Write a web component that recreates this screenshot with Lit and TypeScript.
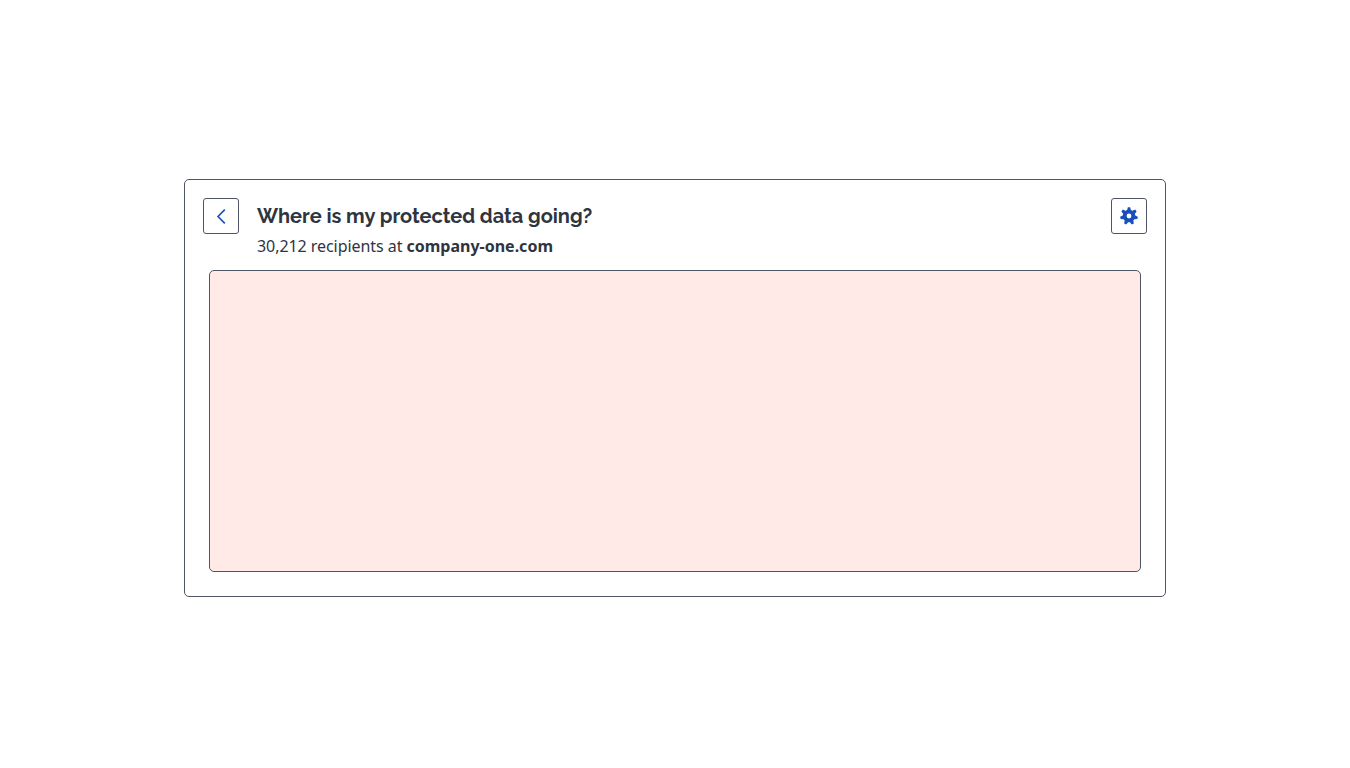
import { LitElement, html, css } from "lit";
import { customElement, property } from "lit/decorators.js";

// Builds a cog outline with evenly spaced teeth, the first one pointing up.
function cogPath(teeth: number, root: number, tip: number): string {
  const step = (Math.PI * 2) / teeth;
  const points: string[] = [];
  for (let i = 0; i < teeth; i++) {
    const a = i * step - Math.PI / 2;
    const corners: [number, number][] = [
      [root, -0.3],
      [tip, -0.13],
      [tip, 0.13],
      [root, 0.3],
    ];
    for (const [r, d] of corners) {
      points.push(`${(9 + r * Math.cos(a + d)).toFixed(2)} ${(9 + r * Math.sin(a + d)).toFixed(2)}`);
    }
  }
  return `M${points.join("L")}ZM9 6.6a2.4 2.4 0 1 0 0 4.8a2.4 2.4 0 1 0 0-4.8Z`;
}

const COG = cogPath(7, 6.3, 8.9);

@customElement("icon-button")
class IconButton extends LitElement {
  @property() icon = "back";
  @property() label = "";

  static styles = css`
    :host {
      display: block;
      flex: none;
    }
    .button {
      display: flex;
      align-items: center;
      justify-content: center;
      box-sizing: border-box;
      width: 36px;
      height: 36px;
      margin: 0;
      padding: 0;
      border: 1px solid #505565;
      border-radius: 3px;
      background: #fff;
      color: #1850bb;
    }
    .glyph {
      display: block;
      width: 18px;
      height: 18px;
    }
  `;

  render() {
    return html`<button class="button" aria-label=${this.label}>
      ${this.icon === "back"
        ? html`<svg class="glyph" viewBox="0 0 18 18">
            <path d="M12.8 2.6L6 9.5L12.8 16.4" fill="none" stroke="currentColor" stroke-width="1.6" />
          </svg>`
        : html`<svg class="glyph" viewBox="0 0 18 18">
            <path d=${COG} fill="currentColor" fill-rule="evenodd" />
          </svg>`}
    </button>`;
  }
}

@customElement("app-root")
class AppRoot extends LitElement {
  static styles = css`
    :host {
      display: flex;
      justify-content: center;
      box-sizing: border-box;
      height: 768px;
      padding-top: 179px;
      background: #fff;
      color: #2f343f;
      font-family: "Noto Sans", sans-serif;
    }
    .card {
      display: flex;
      flex-direction: column;
      box-sizing: border-box;
      width: 982px;
      height: 418px;
      padding: 18px 18px 24px;
      border: 1px solid #505565;
      border-radius: 5px;
    }
    .header {
      display: flex;
      align-items: flex-start;
      gap: 18px;
      height: 72px;
    }
    .heading {
      flex: 1;
    }
    .title {
      margin: 0;
      font: 700 20px/36px Raleway, Lato, sans-serif;
      letter-spacing: -0.02px;
      white-space: nowrap;
    }
    .subtitle {
      margin: 0;
      font-size: 16px;
      line-height: 24px;
      letter-spacing: -0.06px;
    }
    .domain {
      letter-spacing: 0;
    }
    .panel {
      flex: 1;
      margin: 0 6px;
      border: 1px solid #505565;
      border-radius: 5px;
      background: #ffeae8;
    }
  `;

  render() {
    return html`<section class="card">
      <header class="header">
        <icon-button icon="back" label="Back"></icon-button>
        <div class="heading">
          <h1 class="title">Where is my protected data going?</h1>
          <p class="subtitle">30,212 recipients at <strong class="domain">company-one.com</strong></p>
        </div>
        <icon-button icon="settings" label="Settings"></icon-button>
      </header>
      <div class="panel"></div>
    </section>`;
  }
}
